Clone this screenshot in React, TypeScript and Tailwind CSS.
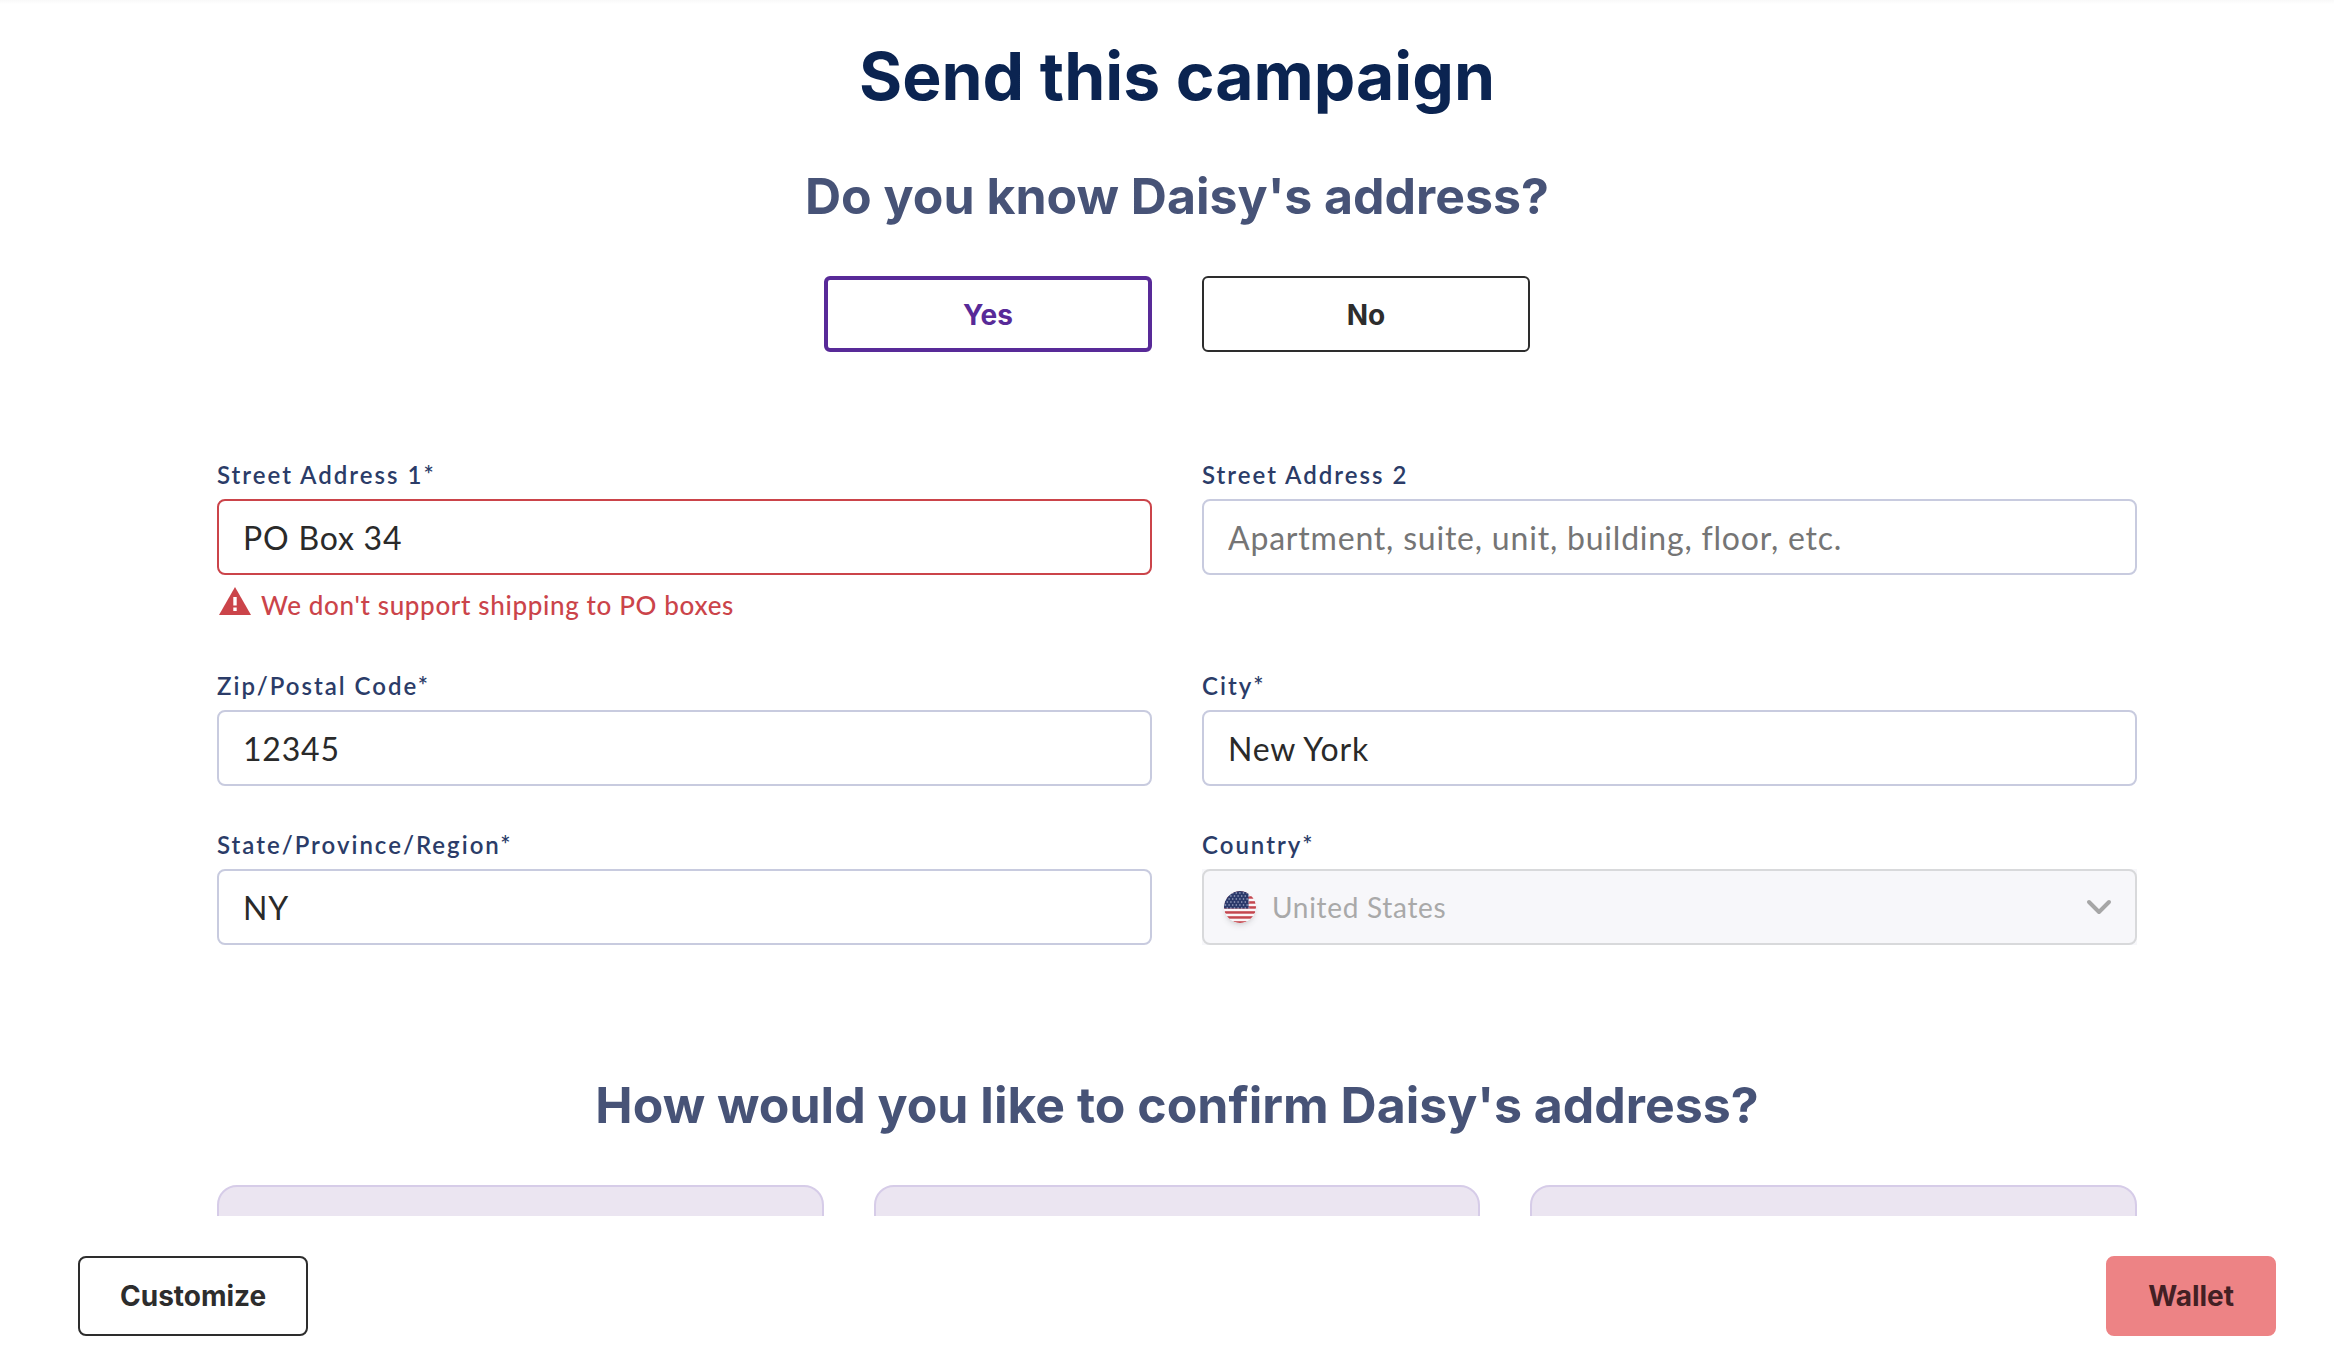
import { useState } from "react";

type FieldProps = {
  id: string;
  label: string;
  value?: string;
  placeholder?: string;
  error?: string;
};

const choices = ["Yes", "No"];
const confirmOptions = ["email", "sms", "manual"];

function WarningIcon() {
  return (
    <svg className="h-7 w-8 shrink-0" viewBox="0 0 32 28" aria-hidden="true">
      <path d="M16 0L32 28H0Z" fill="#cb444a" />
      <path d="M14.3 10h3.4v8.4h-3.4zM14.3 20.6h3.4v3.4h-3.4z" fill="#fff" />
    </svg>
  );
}

function UsFlag() {
  const stars = [];
  for (let row = 0; row < 6; row++) {
    for (let col = 0; col < 7; col++) {
      stars.push(
        <circle
          key={`${row}-${col}`}
          cx={1.5 + col * 3.6 + (row % 2) * 1.8}
          cy={2 + row * 3}
          r="0.8"
          fill="#a9b0cc"
        />
      );
    }
  }
  return (
    <svg className="size-8 rounded-full shadow-md" viewBox="0 0 32 32" aria-hidden="true">
      <defs>
        <clipPath id="flagCircle">
          <circle cx="16" cy="16" r="16" />
        </clipPath>
      </defs>
      <g clipPath="url(#flagCircle)">
        <rect width="32" height="32" fill="#fbf6f8" />
        {[0, 1, 2, 3, 4, 5, 6].map((n) => (
          <rect key={n} y={n * 5 + 0.2} width="32" height="2.5" fill="#c4474f" />
        ))}
        <rect width="24.5" height="17.5" fill="#2b3a6b" />
        {stars}
      </g>
    </svg>
  );
}

function Field({ id, label, value = "", placeholder, error }: FieldProps) {
  const [text, setText] = useState(value);

  return (
    <div className="flex flex-col">
      <label htmlFor={id} className="mb-2 text-2xl leading-8 font-semibold tracking-[2px] text-[#2b3c68]">
        {label}
      </label>
      <input
        id={id}
        type="text"
        value={text}
        placeholder={placeholder}
        onChange={(e) => setText(e.target.value)}
        className={`h-[76px] w-full rounded-lg border-2 bg-white px-6 text-[32px] tracking-wide text-[#2a2a2a] placeholder:text-[#757575] ${
          error ? "border-[#cb444a]" : "border-[#c8cbdf]"
        }`}
      />
      {error && (
        <p className="mt-3 flex gap-2.5 pb-1 pl-0.5 text-[26px] leading-9 font-medium tracking-wide text-[#cb444a]">
          <WarningIcon />
          {error}
        </p>
      )}
    </div>
  );
}

function CountrySelect() {
  return (
    <div className="flex flex-col">
      <label htmlFor="country" className="mb-2 text-2xl leading-8 font-semibold tracking-[2px] text-[#2b3c68]">
        Country*
      </label>
      <div className="relative bg-[#f7f7fa]">
        <select
          id="country"
          disabled
          className="h-[76px] w-full appearance-none rounded-lg border-2 border-[#d8d9db] bg-[#f7f7fa] pl-[68px] text-[28px] tracking-wide text-[#a9a9a9] opacity-100"
        >
          <option>United States</option>
        </select>
        <div className="pointer-events-none absolute inset-0 flex items-center justify-between pr-6 pl-[22px]">
          <UsFlag />
          <svg className="h-4 w-7" viewBox="0 0 28 16" fill="none" aria-hidden="true">
            <path d="M4 3L14 13L24 3" stroke="#a6a6a6" strokeWidth="4" strokeLinecap="round" strokeLinejoin="round" />
          </svg>
        </div>
      </div>
    </div>
  );
}

export default function App() {
  const [knowsAddress, setKnowsAddress] = useState("Yes");

  return (
    <div className="flex h-screen flex-col bg-white font-['Lato',sans-serif]">
      <div className="h-1 bg-linear-to-b from-[#f9f9f9] to-white"></div>
      <main className="min-h-0 flex-1 overflow-hidden pl-5">
        <div className="mx-auto max-w-[1920px] pt-8">
          <h1 className="text-center font-['Inter',sans-serif] text-[66px] leading-20 font-bold text-[#0b2451]">
            Send this campaign
          </h1>
          <h2 className="mt-12 text-center font-['Inter',sans-serif] text-[50px] leading-16 font-bold text-[#475377]">
            Do you know Daisy's address?
          </h2>

          <div className="mt-12 flex justify-center gap-[50px]">
            {choices.map((choice) => (
              <button
                key={choice}
                type="button"
                onClick={() => setKnowsAddress(choice)}
                className={`h-[76px] w-[328px] rounded-md bg-white pt-0.5 font-['Inter',sans-serif] text-[28px] font-bold ${
                  knowsAddress === choice
                    ? "border-4 border-[#582a98] text-[#582a98]"
                    : "border-2 border-[#2d2d2d] text-[#2d2d2d]"
                }`}
              >
                {choice}
              </button>
            ))}
          </div>

          <form className="mt-[107px] grid grid-cols-2 gap-x-[50px] gap-y-[43px]">
            <Field id="street1" label="Street Address 1*" value="PO Box 34" error="We don't support shipping to PO boxes" />
            <Field id="street2" label="Street Address 2" placeholder="Apartment, suite, unit, building, floor, etc." />
            <Field id="zip" label="Zip/Postal Code*" value="12345" />
            <Field id="city" label="City*" value="New York" />
            <Field id="state" label="State/Province/Region*" value="NY" />
            <CountrySelect />
          </form>

          <h2 className="mt-32 text-center font-['Inter',sans-serif] text-[50px] leading-16 font-bold text-[#475377]">
            How would you like to confirm Daisy's address?
          </h2>
          <div className="mt-12 grid grid-cols-3 gap-[50px]">
            {confirmOptions.map((option) => (
              <div key={option} className="h-80 rounded-[20px] border-2 border-[#d6cce8] bg-[#ebe5f1]"></div>
            ))}
          </div>
        </div>
      </main>

      <footer className="flex justify-between bg-white pt-10 pr-[58px] pb-[26px] pl-[78px] font-['Inter',sans-serif]">
        <button type="button" className="h-20 rounded-lg border-2 border-[#2d2d2d] bg-white px-10 text-[28px] font-bold text-[#2d2d2d]">
          Customize
        </button>
        <button type="button" className="h-20 rounded-lg border-2 border-[#ed8385] bg-[#ed8385] px-10 text-[28px] font-bold text-[#432024]">
          Wallet
        </button>
      </footer>
    </div>
  );
}
